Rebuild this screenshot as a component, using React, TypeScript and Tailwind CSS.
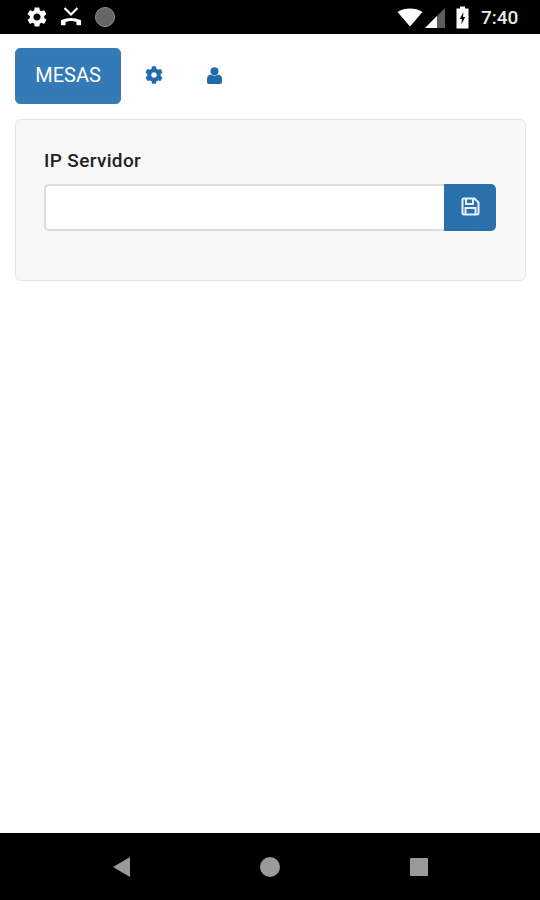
import { FaCog } from "react-icons/fa";
import { MdSettings } from "react-icons/md";

export default function App() {
  return (
    <div className="flex h-[900px] w-[540px] flex-col bg-white font-['Roboto',sans-serif]">
      <div className="flex h-[34px] shrink-0 items-center justify-between bg-black pl-[25px] pr-[23px] text-white">
        <div className="flex items-center">
          <MdSettings className="h-[24px] w-[24px]" />
          <svg viewBox="0 0 24 24" className="ml-[10px] h-[24px] w-[24px]" fill="white">
            <path d="M12 13c-3.400 0-6.600.7-9.500 2-.4.2-.6.5-.6.9v3.700c0 .4.3.7.7.7h3.300c.4 0 .7-.3.7-.7v-2.700c1.700-.6 3.500-.9 5.400-.9s3.700.3 5.400.9v2.700c0 .4.300.7.700.7h3.300c.4 0 .7-.3.700-.7v-3.700c0-.4-.2-.7-.6-.9-2.900-1.300-6.100-2-9.500-2z" />
            <path d="M5.500 3 L12 9.500 L18.500 3" fill="none" stroke="white" strokeWidth="2.200" />
          </svg>
          <div className="ml-[12px] h-[20px] w-[20px] rounded-full border border-[#8f8f8f] bg-[#666666]" />
        </div>
        <div className="flex items-center">
          <svg viewBox="0 0 26 19" className="h-[19px] w-[26px]" fill="white">
            <path d="M13 18.500 L0.500 4 C4 1.500 8.300 0.500 13 0.500 C17.700 0.500 22 1.500 25.500 4 Z" />
          </svg>
          <svg viewBox="0 0 20 20" className="ml-[2px] mt-[2px] h-[20px] w-[20px]">
            <path d="M0 20 L20 0 V20 Z" fill="#5c5c5c" />
            <path d="M0 20 L12 8 V20 Z" fill="white" />
          </svg>
          <svg viewBox="0 0 13 23" className="ml-[11px] h-[23px] w-[13px]">
            <path d="M4 0.500 H9 V2.500 H12.500 V22.500 H0.500 V2.500 H4 Z" fill="white" />
            <path d="M7.400 6 L3.800 13 H6 L5.300 18.500 L9.200 11 H7 Z" fill="black" />
          </svg>
          <span className="ml-[12px] w-[36px] text-[19px] leading-none text-[#e8e8e8] [font-weight:500]">7:40</span>
        </div>
      </div>

      <div className="flex-1 px-[15px] pt-[14px]">
        <div className="flex items-center">
          <div className="flex h-[56px] w-[106px] items-center justify-center rounded-[5px] border border-[#3a7ab2] bg-[#337ab7] pb-[3px] text-[20px] text-white">
            MESAS
          </div>
          <FaCog className="mb-[2px] ml-[24px] h-[18px] w-[18px] text-[#1f6bab]" />
          <svg viewBox="0 0 15 17" className="mb-[2px] ml-[44px] h-[17px] w-[15px]" fill="#1f6bab">
            <circle cx="7.500" cy="4.200" r="4" />
            <path d="M3.500 7.500 C5 9 10 9 11.500 7.500 C13.500 8 15 9.500 15 12 V15 C15 16.200 14.200 17 13 17 H2 C0.800 17 0 16.200 0 15 V12 C0 9.500 1.500 8 3.500 7.500 Z" />
          </svg>
        </div>

        <div className="mt-[15px] h-[162px] w-[511px] rounded-[6px] border border-[#e4e4e4] bg-[#f8f8f8] pl-[28px] pt-[30px]">
          <div className="text-[19px] font-medium leading-[22px] tracking-[0.35px] text-[#222222]">IP Servidor</div>
          <div className="mt-[12px] flex h-[47px] w-[452px]">
            <div className="w-[400px] rounded-l-[5px] border-2 border-r-0 border-[#dcdcdc] bg-white" />
            <div className="flex w-[52px] items-center justify-center rounded-r-[5px] bg-[#2a70ad] pb-[2px]">
              <svg viewBox="0 0 19 19" className="h-[19px] w-[19px]" fill="none" stroke="#eaf2f9" strokeWidth="2">
                <path d="M3 1.500 H13.500 L17.500 5.500 V16 C17.500 17 17 17.500 16 17.500 H3 C2 17.500 1.500 17 1.500 16 V3 C1.500 2 2 1.500 3 1.500 Z" />
                <path d="M5 2 V7 H12 V2" />
                <path d="M4.500 17 V11 H14.500 V17" />
              </svg>
            </div>
          </div>
        </div>
      </div>

      <div className="flex h-[67px] shrink-0 items-center bg-black pl-[113px]">
        <svg viewBox="0 0 17 20" className="h-[20px] w-[17px]">
          <path d="M17 0 V20 L0 10 Z" fill="#9a9a9a" />
        </svg>
        <div className="ml-[130px] h-[20px] w-[20px] rounded-full bg-[#9a9a9a]" />
        <div className="ml-[130px] h-[18px] w-[18px] rounded-[1px] bg-[#9a9a9a]" />
      </div>
    </div>
  );
}
